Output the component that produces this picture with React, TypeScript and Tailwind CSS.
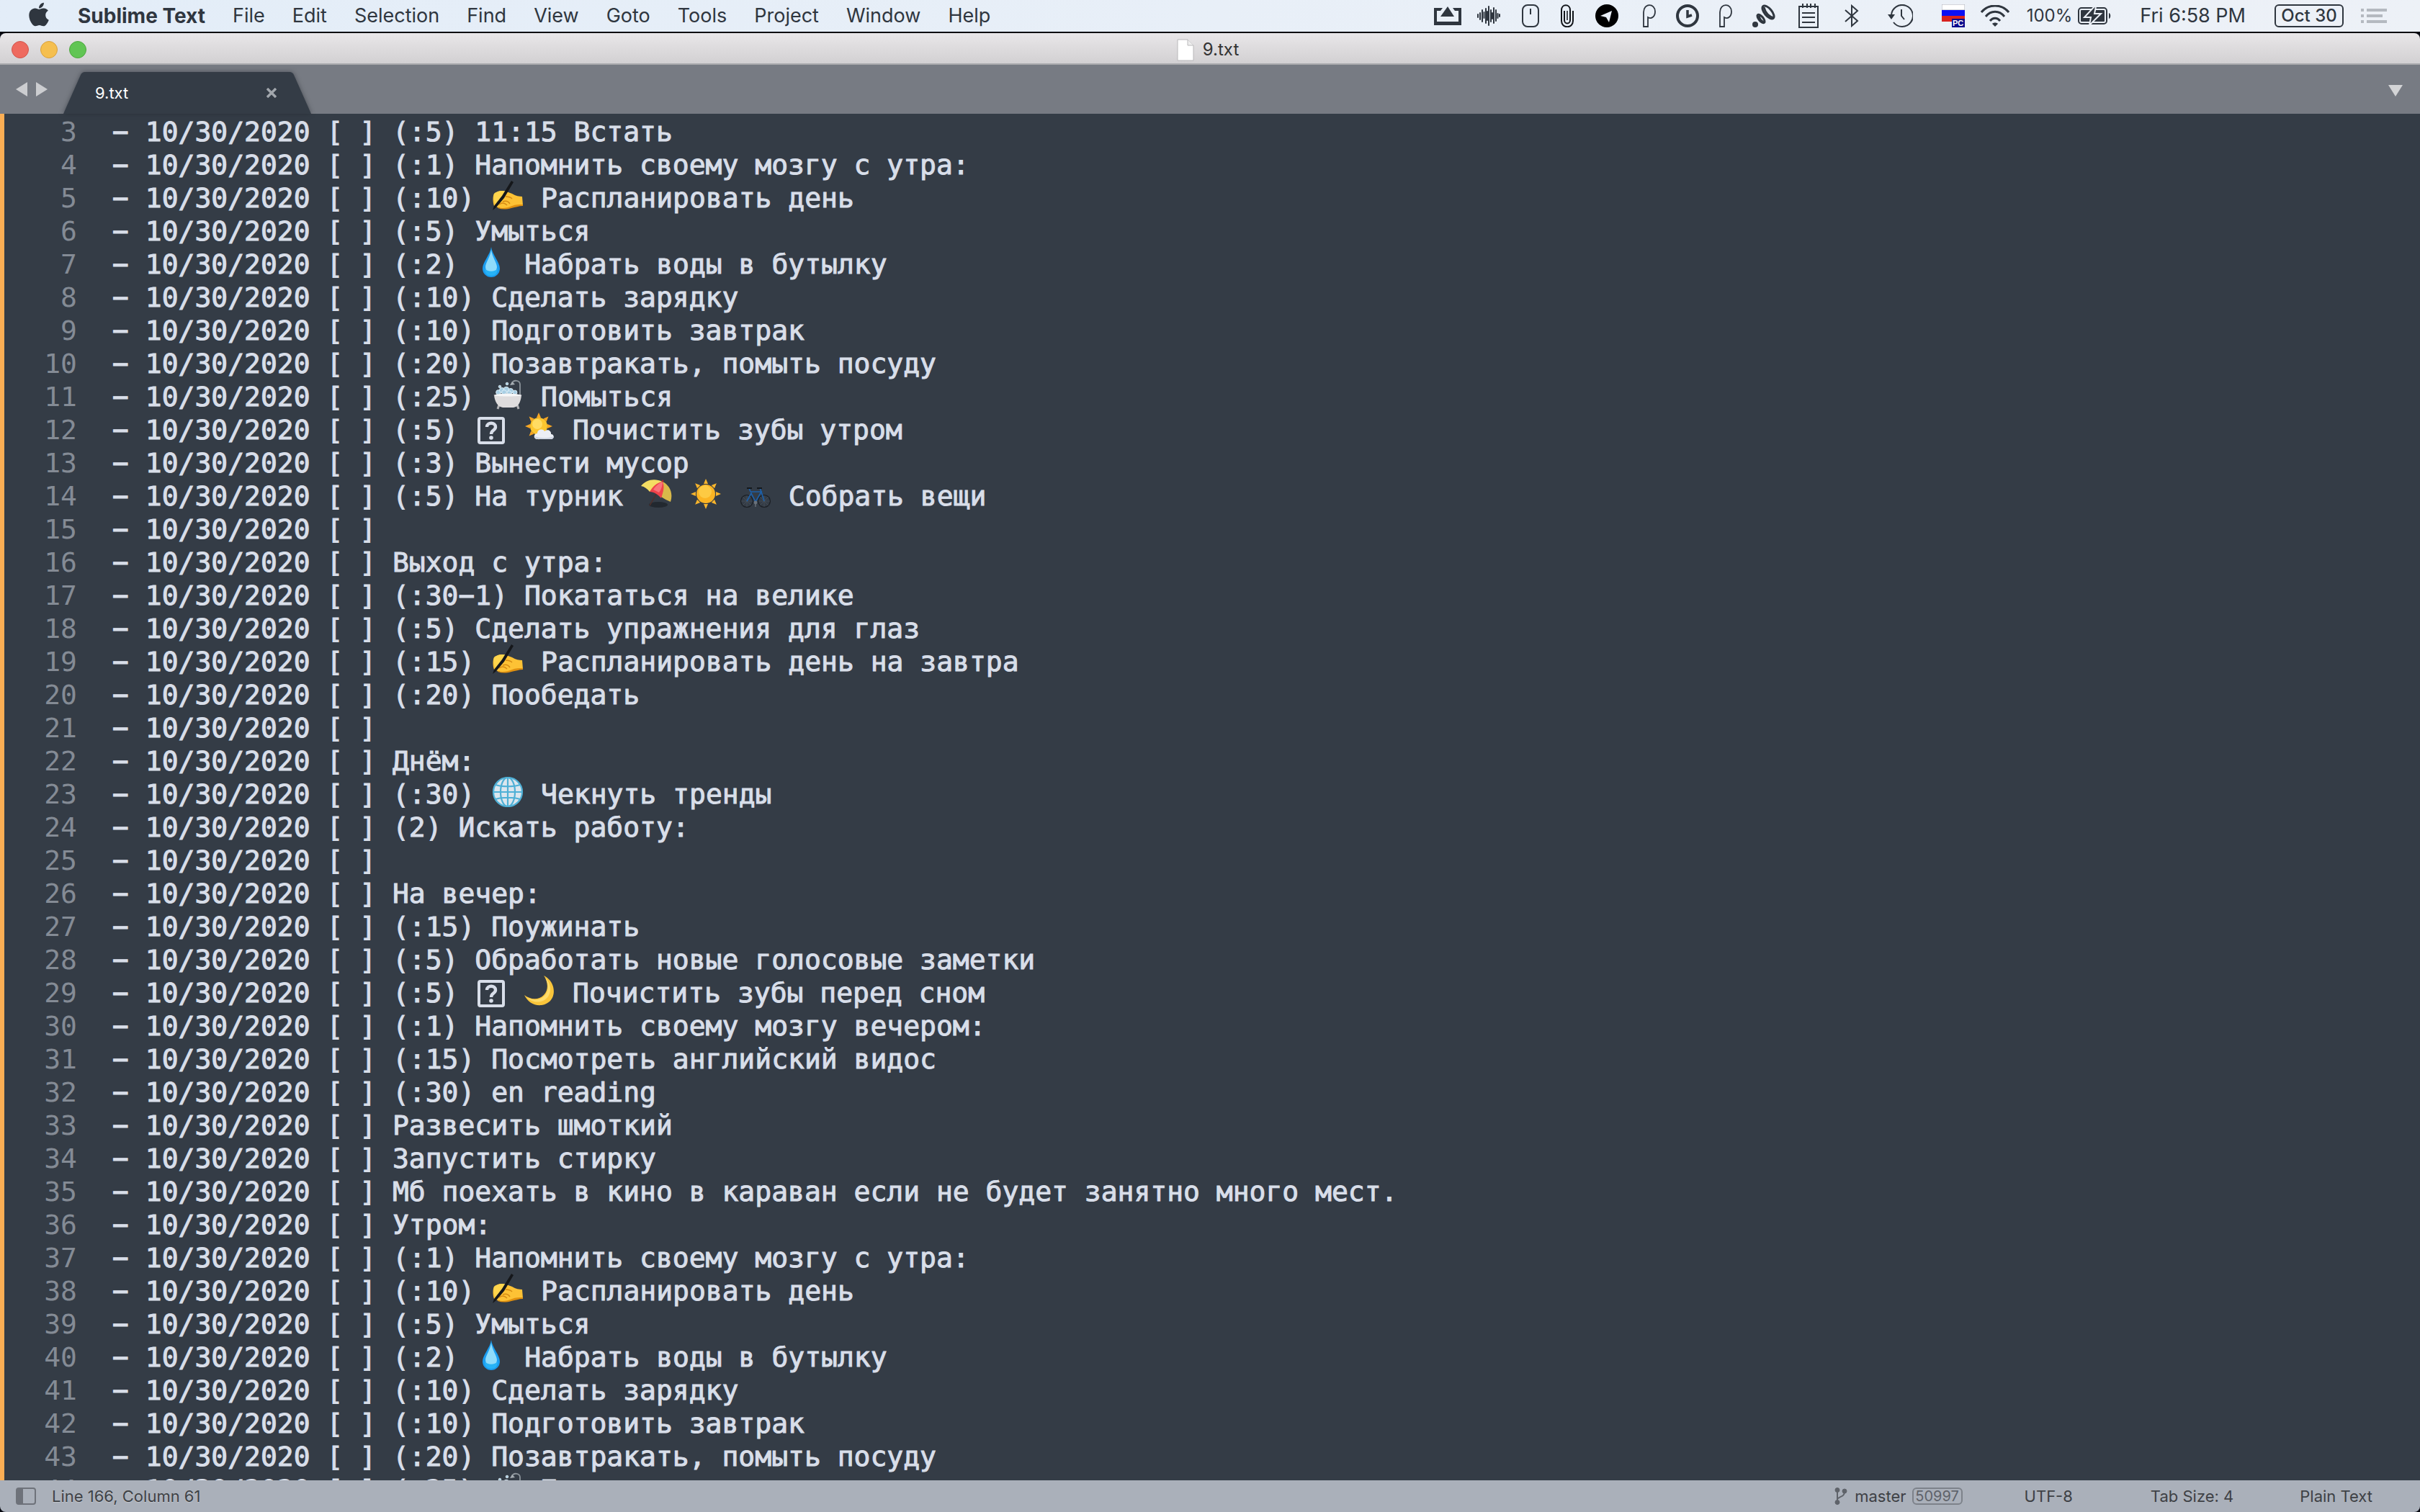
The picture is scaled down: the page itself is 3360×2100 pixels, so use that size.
import type { ReactNode } from "react"
import { FaApple } from "react-icons/fa"

const menus = ["File", "Edit", "Selection", "Find", "View", "Goto", "Tools", "Project", "Window", "Help"]

const lines = [
  "(:5) 11:15 Встать",
  "(:1) Напомнить своему мозгу с утра:",
  "(:10) ✍ Распланировать день",
  "(:5) Умыться",
  "(:2) 💧 Набрать воды в бутылку",
  "(:10) Сделать зарядку",
  "(:10) Подготовить завтрак",
  "(:20) Позавтракать, помыть посуду",
  "(:25) 🛁 Помыться",
  "(:5) 🪥 🌤 Почистить зубы утром",
  "(:3) Вынести мусор",
  "(:5) На турник ⛱ ☀ 🚲 Собрать вещи",
  "",
  "Выход с утра:",
  "(:30−1) Покататься на велике",
  "(:5) Сделать упражнения для глаз",
  "(:15) ✍ Распланировать день на завтра",
  "(:20) Пообедать",
  "",
  "Днём:",
  "(:30) 🌐 Чекнуть тренды",
  "(2) Искать работу:",
  "",
  "На вечер:",
  "(:15) Поужинать",
  "(:5) Обработать новые голосовые заметки",
  "(:5) 🪥 🌙 Почистить зубы перед сном",
  "(:1) Напомнить своему мозгу вечером:",
  "(:15) Посмотреть английский видос",
  "(:30) en reading",
  "Развесить шмоткий",
  "Запустить стирку",
  "Мб поехать в кино в караван если не будет занятно много мест.",
  "Утром:",
  "(:1) Напомнить своему мозгу с утра:",
  "(:10) ✍ Распланировать день",
  "(:5) Умыться",
  "(:2) 💧 Набрать воды в бутылку",
  "(:10) Сделать зарядку",
  "(:10) Подготовить завтрак",
  "(:20) Позавтракать, помыть посуду",
  "(:25) 🛁 Помыться",
]

const rays = [0, 45, 90, 135, 180, 225, 270, 315]

// All emoji are drawn on a 42 x 42 grid
const emoji: Record<string, ReactNode> = {
  "✍": (
    <>
      <path d="M2 35 C0 29 0 22 2 18 C7 14 13 13 19 15 L27 18 C32 21 37 22 41 22 L42 34 C36 34 32 36 26 37 C19 39 13 39 7 37 Z" fill="#fdc235" />
      <path d="M7 37 C13 39 20 38 27 35 C32 33 36 33 42 33 L42 35 C36 35 32 37 26 38 C19 40 13 40 7 38 Z" fill="#e0900f" />
      <path d="M2 18 C7 14 13 13 19 15 L13 26 L4 33 C1 28 1 22 2 18 Z" fill="#ffd54d" />
      <path d="M9 33 C13 30 17 31 20 34 M14 29 C19 27 22 29 24 32 M18 22 C22 22 25 23 27 25" stroke="#d68b14" strokeWidth="1.5" fill="none" />
      <path d="M26 0 L29 2 L16 24 L5 37 L0 41 L2 35 L13 21 Z" fill="#15171a" />
    </>
  ),
  "💧": (
    <>
      <path d="M21 0 C22 10 33 21 33 30 A12 12 0 0 1 9 30 C9 21 20 10 21 0 Z" fill="#1a9df0" />
      <path d="M21 4 C22 13 29 22 29 28 A8 8 0 0 1 13 28 C13 22 20 13 21 4 Z" fill="#8fdcfb" />
      <path d="M12 30 C16 35 26 35 30 30 C30 37 26 40 21 40 C16 40 12 37 12 30 Z" fill="#27b3f7" />
    </>
  ),
  "🛁": (
    <>
      <path d="M38 27 L38 7 C38 1 29 0 27 5" stroke="#8c949b" strokeWidth="1.8" fill="none" />
      <path d="M24 8 L27 3 L31 7 Z" fill="#a7aeb4" />
      <g fill="#a9cfe4" stroke="#eaf6fc" strokeWidth="0.8">
        <circle cx="8" cy="18" r="3.4" />
        <circle cx="13" cy="15" r="3.6" />
        <circle cx="19" cy="14" r="3.8" />
        <circle cx="25" cy="16" r="3.6" />
        <circle cx="31" cy="18" r="3" />
        <circle cx="16" cy="18" r="3.4" />
        <circle cx="23" cy="19" r="3.2" />
        <circle cx="10" cy="10" r="1.8" />
        <circle cx="20" cy="6" r="1.8" />
      </g>
      <path d="M9 35 L7 41 M34 35 L36 41" stroke="#b3b3b6" strokeWidth="3" />
      <path d="M2 22 C8 19 34 19 40 22 C39 31 36 38 29 39 L14 39 C7 38 3 31 2 22 Z" fill="#dedcdd" />
      <path d="M1 22 C10 19 32 19 41 22 C32 24 10 24 1 22 Z" fill="#f6f6f7" />
    </>
  ),
  "🌤": (
    <>
      <g fill="#f6a623">
        {rays.map((a) => (
          <path key={a} d="M17 7 H23 L20 0 Z" transform={`rotate(${a} 20 19)`} />
        ))}
      </g>
      <circle cx="20" cy="19" r="12" fill="#fcc62f" />
      <circle cx="18" cy="16" r="7" fill="#ffdc63" />
      <path d="M17 37 C12 36 13 29 18 29 C18 23 26 22 28 26 C33 22 38 26 37 30 C42 30 42 37 37 37 Z" fill="#eceff5" />
      <path d="M17 37 C15 36 15 34 15 33 C22 36 34 36 41 33 C41 35 39 37 37 37 Z" fill="#cfd6e2" />
    </>
  ),
  "☀": (
    <>
      <g fill="#f9b52c">
        {rays.map((a) => (
          <path key={a} d="M18 7 L24 7 L21 0 Z" transform={`rotate(${a} 21 21)`} />
        ))}
      </g>
      <circle cx="21" cy="21" r="13" fill="#fbb423" />
      <circle cx="20" cy="18" r="9" fill="#fdca43" />
    </>
  ),
  "⛱": (
    <>
      <ellipse cx="24" cy="36" rx="13" ry="4" fill="#22282f" />
      <path d="M22 20 L12 37" stroke="#4b302d" strokeWidth="1.6" />
      <path d="M0 10 C7 1 19 -1 30 4 L12 18 C9 14 5 11 0 10 Z" fill="#f4dd63" />
      <path d="M30 4 C40 9 45 20 41 32 C37 30 32 28 28 25 Z" fill="#d9b94a" />
      <path d="M12 18 C16 11 22 5 30 4 C33 11 31 18 28 27 C24 22 18 18 12 18 Z" fill="#f0424a" />
      <path d="M17 15 C20 10 25 6 30 4 C30 9 28 15 25 19 Z" fill="#f8737a" />
      <circle cx="30" cy="3" r="1.5" fill="#a92b30" />
    </>
  ),
  "🚲": (
    <>
      <g fill="none" stroke="#1a1e23" strokeWidth="1.3">
        <circle cx="9" cy="31" r="8.4" />
        <circle cx="33" cy="31" r="8.4" />
        <path d="M9 23 V39 M1 31 H17 M3 25 L15 37 M15 25 L3 37 M33 23 V39 M25 31 H41 M27 25 L39 37 M39 25 L27 37" stroke="#4d555e" strokeWidth="0.6" />
      </g>
      <path d="M9 31 L15 20 L21 32 L29 18 H14 M29 18 L33 31 M14 18 L12 13 M29 18 L27 13" stroke="#1c5fa8" strokeWidth="1.7" fill="none" />
      <path d="M9 13 H16 M23 13 H30" stroke="#14181c" strokeWidth="2" fill="none" />
      <circle cx="21" cy="33" r="2.400" fill="#6a727b" />
      <path d="M21 34 V39" stroke="#6a727b" strokeWidth="1.4" />
    </>
  ),
  "🌐": (
    <>
      <circle cx="21" cy="21" r="20" fill="#dbe6ee" />
      <g fill="none" stroke="#4fb0d6" strokeWidth="2.2">
        <circle cx="21" cy="21" r="20" />
        <ellipse cx="21" cy="21" rx="10" ry="20" />
        <path d="M21 1 V41 M1 21 H41 M4 11 C13 14 29 14 38 11 M4 31 C13 28 29 28 38 31" />
      </g>
    </>
  ),
  "🌙": (
    <>
      <path d="M27 0 C46 9 46 38 24 41 C13 42 5 37 0 27 C8 33 19 35 27 27 C34 20 33 8 27 0 Z" fill="#f9c53b" />
      <path d="M29 3 C40 13 38 32 23 36 C14 38 7 34 3 30 C11 35 21 35 28 28 C35 21 33 10 29 3 Z" fill="#fddc6b" />
    </>
  ),
}

function MissingGlyph() {
  return (
    <svg viewBox="0 0 38 38" className="-my-1 inline-block h-[38px] w-11 pr-0.5 pl-1 align-[-3px]">
      <rect x="2" y="2" width="34" height="34" rx="2" fill="none" stroke="#d8dee9" strokeWidth="4" />
      <path d="M13 14 C13 7 25 7 25 14 C25 19 19 18 19 24" fill="none" stroke="#d8dee9" strokeWidth="4.4" />
      <circle cx="19" cy="29" r="2.8" fill="#d8dee9" />
    </svg>
  )
}

function LineText({ text }: { text: string }) {
  return (
    <>
      {text.split(/(✍|💧|🛁|🪥|🌤|⛱|☀|🚲|🌐|🌙)/u).map((part, i) => {
        if (part === "🪥") return <MissingGlyph key={i} />
        if (emoji[part]) {
          return (
            <svg key={i} viewBox="0 0 42 42" className="-my-1 inline-block h-[42px] w-[46px] align-[-1px]" role="img" aria-label={part}>
              {emoji[part]}
            </svg>
          )
        }
        return <span key={i}>{part}</span>
      })}
    </>
  )
}

function PIcon() {
  return (
    <svg viewBox="0 0 18 32" className="h-8 w-4.5" fill="none" stroke="currentColor" strokeWidth="1.8">
      <path d="M1 31 V11 C1 -2 17 -2 17 10 C17 17 12 21 7 18 V31 Z" />
    </svg>
  )
}

function StatusIcons() {
  return (
    <>
      <svg viewBox="0 0 38 26" className="h-[26px] w-[38px]" fill="currentColor">
        <path d="M0 2 H12 L9 6 H4 V21 H34 V6 H29 L26 2 H38 V26 H0 Z" />
        <path d="M19 0 L28 14 H9 Z" />
      </svg>
      <svg viewBox="0 0 32 28" className="ml-5.5 h-7 w-8" stroke="currentColor" strokeWidth="2" strokeLinecap="round">
        <path d="M1 12 V16 M4 10 V19 M7 6 V22 M9.500 9 V17 M12 4 V24 M14 8 V20 M16 1 V27 M19 6 V22 M21 10 V18 M23 3 V24 M26 6 V21 M28.500 11 V17 M31 12 V15" />
      </svg>
      <svg viewBox="0 0 24 32" className="ml-7.5 h-8 w-6" fill="none" stroke="currentColor" strokeWidth="2">
        <rect x="1" y="1" width="22" height="30" rx="7" />
        <path d="M12 6 V14" />
      </svg>
      <svg viewBox="0 0 18 32" className="ml-7.5 h-8 w-4.5 text-[#101318]" fill="none" stroke="currentColor" strokeWidth="2">
        <path d="M17 9 V23 C17 34 1 34 1 23 V8 C1 -1 13 -1 13 8 V22 C13 28 5 28 5 22 V9" />
        <path d="M9 9 V22" strokeWidth="1.5" />
      </svg>
      <svg viewBox="0 0 32 32" className="ml-7.5 size-8">
        <circle cx="16" cy="16" r="16" fill="#000" />
        <path d="M7 16 L23 9 L19 25 L15 18 Z" fill="#eaf0f8" />
      </svg>
      <span className="ml-8.5">
        <PIcon />
      </span>
      <svg viewBox="0 0 32 32" className="ml-7 size-8" fill="none" stroke="currentColor">
        <circle cx="16" cy="16" r="14" strokeWidth="4" />
        <path d="M16 8 V17 L22 15" strokeWidth="3.500" />
      </svg>
      <span className="ml-7">
        <PIcon />
      </span>
      <svg viewBox="0 0 32 32" className="ml-7 size-8" fill="none" stroke="currentColor">
        <circle cx="4" cy="28" r="4" fill="currentColor" stroke="none" />
        <ellipse cx="12" cy="20" rx="3" ry="7" strokeWidth="3" transform="rotate(-40 12 20)" />
        <ellipse cx="22" cy="11" rx="5" ry="11" strokeWidth="3" transform="rotate(-40 22 11)" />
        <path d="M16 4 C18 12 23 17 30 19 M9 16 C10 20 12 23 16 25" strokeWidth="3" />
      </svg>
      <svg viewBox="0 0 28 34" className="ml-8 h-[34px] w-7" fill="none" stroke="currentColor" strokeWidth="2">
        <path d="M1 4 H27 V33 H1 Z M5 13 H23 M5 19 H23 M5 26 H23 M6 0 V6 M12 0 V6 M17 0 V6 M23 0 V6" />
      </svg>
      <svg viewBox="0 0 20 32" className="ml-9 h-8 w-5" fill="none" stroke="currentColor" strokeWidth="2">
        <path d="M1 8 L18 23 L10 30 V2 L18 9 L1 24" />
      </svg>
      <svg viewBox="0 0 35 32" className="ml-10 h-8 w-[35px]" fill="none" stroke="currentColor" strokeWidth="2">
        <path d="M5 15 A15 15 0 1 1 8 25" />
        <path d="M19 7 V16 L23 21" />
        <path d="M0 14 H10 L5 21 Z" fill="currentColor" stroke="none" />
      </svg>
      <svg viewBox="0 0 32 32" className="ml-10 size-8">
        <path d="M0 0 H32 V8 H0 Z" fill="#fff" stroke="#a9acb5" />
        <path d="M0 8 H32 V16 H0 Z" fill="#0b10f5" />
        <path d="M0 16 H32 V24 H0 Z" fill="#d8231f" />
        <path d="M14 20 H32 V32 H14 Z" fill="#0a0a8c" />
        <text x="15" y="30" fontSize="11" fontWeight="bold" fill="#fff" fontFamily="Liberation Sans, sans-serif">PC</text>
      </svg>
      <svg viewBox="0 0 40 30" className="ml-5.5 h-[30px] w-10" fill="none" stroke="currentColor" strokeWidth="3">
        <path d="M1 10 C11 -2 29 -2 39 10 M7 16 C14 7 26 7 33 16 M13 22 C17 17 23 17 27 22" />
        <path d="M16 26 C18 24 22 24 24 26 L20 30 Z" fill="currentColor" stroke="none" />
      </svg>
    </>
  )
}

function MenuBar() {
  return (
    <header className="flex h-11 shrink-0 items-center bg-linear-to-r from-[#e3edf8] to-[#edf1f7] pr-[46px] pl-10 text-[27px] leading-8 text-[#2f363f]">
      <FaApple className="mb-1 h-[38px] w-7" />
      <nav className="ml-10 flex items-center gap-[38px]">
        <button className="text-[28px] font-bold">Sublime Text</button>
        {menus.map((menu) => (
          <button key={menu}>{menu}</button>
        ))}
      </nav>
      <div className="ml-auto flex items-center">
        <StatusIcons />
        <span className="ml-6 text-2xl">100%</span>
        <svg viewBox="0 0 46 24" className="ml-2 h-6 w-[46px]">
          <rect x="1" y="1" width="39" height="22" rx="4" fill="none" stroke="currentColor" strokeWidth="2" />
          <rect x="4" y="4" width="33" height="16" rx="1" fill="currentColor" />
          <path d="M43 8 C46 9 46 15 43 16 Z" fill="currentColor" />
          <path d="M23 -1 L9 14 H18 L16 25 L32 9 H23 L25 -1 Z" fill="currentColor" stroke="#edf1f7" strokeWidth="2" />
        </svg>
        <span className="ml-10">Fri 6:58 PM</span>
        <span className="ml-10 flex h-8 w-24 items-center justify-center rounded-md border-2 border-current text-2xl font-medium">Oct 30</span>
        <button className="ml-6" aria-label="Notification Center">
          <svg viewBox="0 0 36 20" className="h-5 w-9" fill="#b4b9c0">
            <path d="M0 0 H4 V4 H0 Z M8 0 H36 V4 H8 Z M0 8 H4 V12 H0 Z M8 8 H30 V12 H8 Z M0 16 H4 V20 H0 Z M8 16 H36 V20 H8 Z" />
          </svg>
        </button>
      </div>
    </header>
  )
}

function TitleBar() {
  return (
    <div className="relative flex h-11 shrink-0 items-center justify-center rounded-t-lg border-b-2 border-[#a8a9ac] bg-linear-to-b from-[#e9e7e9] to-[#d2d0d2] pt-1 pr-1.5 text-2xl text-[#333]">
      <div className="absolute left-4 flex gap-4">
        <button className="size-6 rounded-full border border-[#d2554c] bg-[#ee6a5f]" aria-label="Close" />
        <button className="size-6 rounded-full border border-[#d9a13b] bg-[#f5bf4f]" aria-label="Minimize" />
        <button className="size-6 rounded-full border border-[#4da73f] bg-[#61c554]" aria-label="Zoom" />
      </div>
      <svg viewBox="0 0 24 31" className="mr-3 h-[31px] w-6">
        <path d="M1 1 H15 L23 9 V30 H1 Z" fill="#fff" stroke="#b9b8ba" />
        <path d="M15 1 V9 H23" fill="#eee" stroke="#b9b8ba" />
      </svg>
      <h1>9.txt</h1>
    </div>
  )
}

function TabBar() {
  return (
    <div className="flex h-17 shrink-0 items-end bg-[#777b83] text-[22px]">
      <div className="flex h-17 w-22 items-center gap-3 pl-[22px]">
        <button aria-label="Previous tab">
          <svg viewBox="0 0 16 20" className="h-5 w-4"><path d="M16 0 V20 L0 10 Z" fill="#cccdd0" /></svg>
        </button>
        <button aria-label="Next tab">
          <svg viewBox="0 0 16 20" className="h-5 w-4"><path d="M0 0 V20 L16 10 Z" fill="#cccdd0" /></svg>
        </button>
      </div>
      <div className="relative flex h-[58px] w-[344px] items-center justify-between pr-12 pl-11 text-white">
        <svg viewBox="0 0 344 58" className="absolute inset-0 h-[58px] w-[344px] drop-shadow-[0_0_3px_rgba(30,34,40,0.5)]">
          <path d="M0 58 L24 4 Q26 0 30 0 H314 Q318 0 320 4 L344 58 Z" fill="#343c46" />
        </svg>
        <span className="relative">9.txt</span>
        <button className="relative" aria-label="Close tab">
          <svg viewBox="0 0 14 14" className="size-3.5"><path d="M1 1 L13 13 M13 1 L1 13" stroke="#a2a7ad" strokeWidth="3.4" /></svg>
        </button>
      </div>
      <button className="mr-6 mb-6 ml-auto" aria-label="Show tabs">
        <svg viewBox="0 0 20 16" className="h-4 w-5"><path d="M0 0 H20 L10 16 Z" fill="#d3d4d6" /></svg>
      </button>
    </div>
  )
}

function StatusBar() {
  return (
    <footer className="flex h-11 shrink-0 items-center rounded-b-lg bg-[#aab0ba] pr-[66px] pl-[22px] text-[22px] text-[#3e4145] [text-shadow:0_1px_1px_#c3c8cf]">
      <button aria-label="Toggle side bar">
        <svg viewBox="0 0 28 24" className="h-6 w-7">
          <rect x="1" y="1" width="26" height="22" rx="3" fill="none" stroke="#6e727a" strokeWidth="2" />
          <path d="M1 1 H10 V23 H1 Z" fill="#6e727a" />
        </svg>
      </button>
      <span className="ml-[22px]">Line 166, Column 61</span>
      <button className="ml-auto flex items-center">
        <svg viewBox="0 0 18 24" className="mr-2.5 h-6 w-4.5" fill="#5f636a" stroke="#5f636a">
          <circle cx="4" cy="3.500" r="3" />
          <circle cx="4" cy="20.500" r="3" />
          <circle cx="14" cy="5" r="3" />
          <path d="M4 4 V20 M14 6 C14 13 7 12 4 16" fill="none" strokeWidth="2" />
        </svg>
        master
        <span className="ml-2 flex h-6 w-[70px] items-center justify-center rounded-md border-2 border-[#7d828a] text-xl text-[#5f636a]">50997</span>
      </button>
      <button className="ml-[86px]">UTF-8</button>
      <button className="ml-[108px]">Tab Size: 4</button>
      <button className="ml-[92px]">Plain Text</button>
    </footer>
  )
}

export default function App() {
  return (
    <div className="flex h-screen flex-col overflow-hidden bg-[#05070f] font-[Inter,sans-serif]">
      <MenuBar />
      <main className="mt-0.5 flex min-h-0 flex-1 flex-col">
        <TitleBar />
        <TabBar />
        <section className="min-h-0 flex-1 overflow-hidden border-l-6 border-[#fbae54] bg-[#343c46] pt-0.5 font-['DejaVu_Sans_Mono',monospace] text-[38px] leading-[46px] text-[#d8dee9]">
          {lines.map((text, i) => (
            <div key={i} className="flex h-[46px] whitespace-pre">
              <span className="w-[101px] shrink-0 text-right text-[#848b95]">{i + 3}</span>
              <span className="ml-[49px] [-webkit-text-stroke:1px]">
                − 10/30/2020 [ ] <LineText text={text} />
              </span>
            </div>
          ))}
        </section>
        <StatusBar />
      </main>
    </div>
  )
}
